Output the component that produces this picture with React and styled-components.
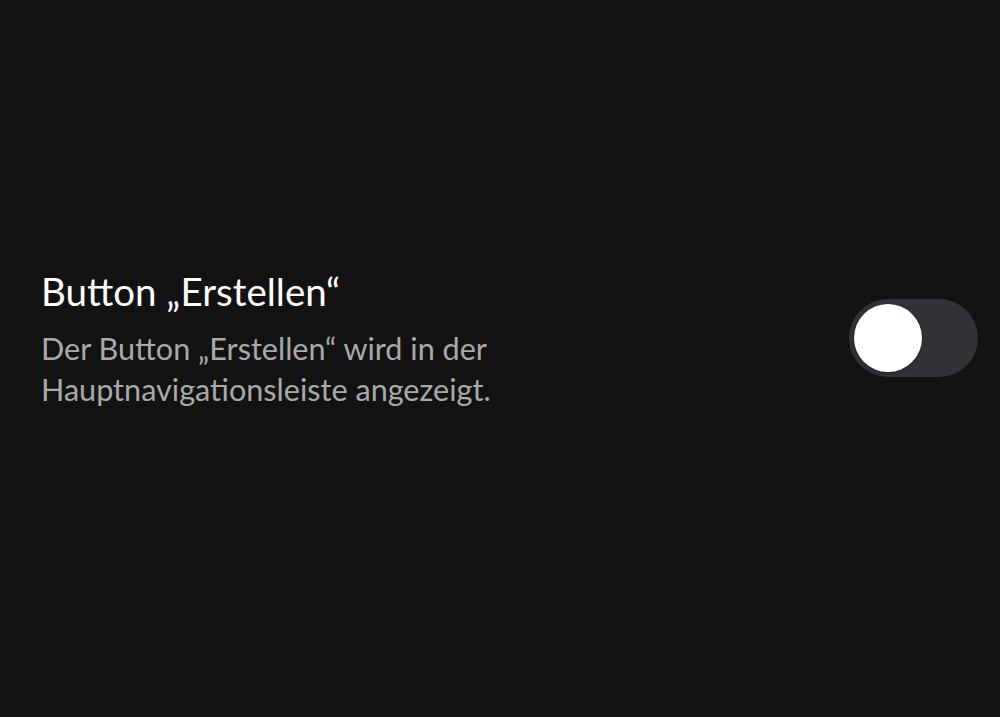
import React, { useState } from "react";
import styled, { createGlobalStyle } from "styled-components";

const GlobalStyle = createGlobalStyle`
  html, body {
    margin: 0;
    padding: 0;
    background: #121212;
  }
  body {
    font-family: Lato, "Noto Sans", sans-serif;
    -webkit-font-smoothing: antialiased;
  }
`;

const Page = styled.div`
  width: 1000px;
  height: 717px;
  box-sizing: border-box;
  background: #121212;
  padding: 266px 22px 0 41px;
`;

const Row = styled.div`
  display: flex;
  align-items: center;
  justify-content: space-between;
  gap: 40px;
`;

const TextBlock = styled.div`
  display: flex;
  flex-direction: column;
  width: 520px;
`;

const Title = styled.div`
  color: #ffffff;
  font-size: 38.5px;
  line-height: 50px;
  font-weight: 400;
`;

const Description = styled.div`
  color: #a9a9a9;
  font-size: 30.6px;
  line-height: 41px;
  margin-top: 12px;
`;

const Track = styled.button`
  flex: none;
  width: 129px;
  height: 78px;
  border: none;
  border-radius: 39px;
  padding: 5px;
  background: ${(p) => (p.$on ? "#4a8cff" : "#313136")};
  display: flex;
  justify-content: ${(p) => (p.$on ? "flex-end" : "flex-start")};
  align-items: center;
  cursor: pointer;
`;

const Knob = styled.span`
  width: 68px;
  height: 68px;
  border-radius: 50%;
  background: #ffffff;
  box-shadow: 0 1px 3px rgba(0, 0, 0, 0.35);
`;

export default function App() {
  const [on, setOn] = useState(false);
  return (
    <>
      <GlobalStyle />
      <Page>
        <Row>
          <TextBlock>
            <Title>Button „Erstellen“</Title>
            <Description>
              Der Button „Erstellen“ wird in der Hauptnavigationsleiste angezeigt.
            </Description>
          </TextBlock>
          <Track $on={on} onClick={() => setOn(!on)} aria-label="Button Erstellen">
            <Knob />
          </Track>
        </Row>
      </Page>
    </>
  );
}
